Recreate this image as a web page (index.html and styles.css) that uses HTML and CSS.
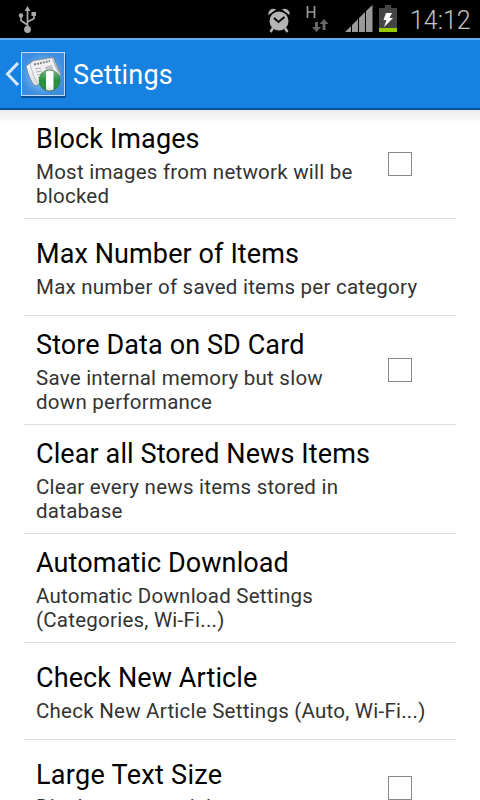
FILE: index.html
```html
<!DOCTYPE html>
<html lang="en">
<head>
<meta charset="utf-8">
<title>Settings</title>
<link rel="stylesheet" href="styles.css">
</head>
<body>
<div class="statusbar">
  <svg class="usb" width="20" height="28" viewBox="0 0 20 28" fill="none" stroke="#aaa" stroke-width="1.7">
    <path d="M9.5 4V23M9.5 19L3 14.5V10M9.5 16L16 12.5V9"/>
    <path d="M6.5 5L9.5 0L12.5 5ZM13.5 6H18V10H13.5Z" fill="#aaa" stroke="none"/>
    <circle cx="3" cy="9.5" r="2.2" fill="#aaa" stroke="none"/>
    <circle cx="9.5" cy="23.5" r="3.4" fill="#aaa" stroke="none"/>
  </svg>
  <svg class="alarm" width="22" height="25" viewBox="0 0 22 25">
    <path d="M5 20L2.5 24M17 20L19.500 24" stroke="#b4b4b4" stroke-width="2.500"/>
    <path d="M0.500 7A5 5 0 0 1 8 1.500ZM21.500 7A5 5 0 0 0 14 1.500Z" fill="#b4b4b4"/>
    <circle cx="11" cy="13" r="9.500" fill="#b4b4b4"/>
    <path d="M6 10L10.500 14L16.500 9" fill="none" stroke="#000" stroke-width="2"/>
  </svg>
  <svg class="data" width="24" height="27" viewBox="0 0 24 27">
    <path d="M1.500 0V12M8.500 0V12M1.500 6H8.500" stroke="#999" stroke-width="1.700" fill="none"/>
    <path d="M9 16V21H6L10.500 26L15 21H12V16ZM16.500 24V18H13.500L18 13L22.500 18H19.500V24Z" fill="#666"/>
  </svg>
  <svg class="signal" width="28" height="27" viewBox="0 0 28 27" fill="#999">
    <path d="M0 27L6 21V27ZM7 20L13 14V27H7ZM14 13L20 7V27H14ZM21 6L27.500 0V27H21Z"/>
  </svg>
  <svg class="battery" width="18" height="27" viewBox="0 0 18 27">
    <path d="M6 0H12V3H18V23H0V3H6Z" fill="#444"/>
    <path d="M0 23H18V27H0Z" fill="#99cc00"/>
    <path d="M7 8H13L10.500 13H14L5 22L7.500 15H4.500Z" fill="#fff"/>
  </svg>
  <span class="clock">14:12</span>
</div>
<header class="actionbar">
  <svg class="back" width="16" height="26" viewBox="0 0 16 26"><path d="M13 2L2.500 13L13 24" fill="none" stroke="#d8e9fa" stroke-width="3"/></svg>
  <svg class="logo" width="46" height="48" viewBox="0 0 46 48">
    <defs>
      <radialGradient id="tile"><stop offset="0" stop-color="#9bd0fa"/><stop offset="1" stop-color="#3c8ee0"/></radialGradient>
      <linearGradient id="paper" x2="1" y2="1"><stop offset="0" stop-color="#fff"/><stop offset="1" stop-color="#c4c6cc"/></linearGradient>
      <clipPath id="ball"><circle cx="28.500" cy="28.500" r="10.500"/></clipPath>
      <linearGradient id="shade" x2="0" y2="1"><stop offset="0" stop-color="#fff" stop-opacity=".45"/><stop offset=".5" stop-color="#fff" stop-opacity="0"/><stop offset="1" stop-color="#000" stop-opacity=".2"/></linearGradient>
    </defs>
    <rect x="0" y="2" width="45" height="44" rx="1" fill="#0a4f97"/>
    <rect x=".5" y=".5" width="43" height="43" fill="url(#tile)" stroke="#c0daf5"/>
    <path d="M5 14L12 9L32 5L40 22L35 27L14 34Q9 30 5 14Z" fill="url(#paper)" stroke="#6b7891" stroke-width=".8"/>
    <path d="M9 12Q12 25 17 32L31 27L38 22L31 6L12 9Z" fill="#f0f0f3" stroke="#999da8" stroke-width=".6"/>
    <path d="M13 12.500L29 9" stroke="#85878e" stroke-width="2" stroke-dasharray="2 1"/>
    <path d="M24 15L31 13L33 20L26 22Z" fill="#bfc1c7"/>
    <path d="M14 17L20 16M15 20L21 19M16 23L21 22M17 26L21 25M33 10L38 21" stroke="#b0b2b8" stroke-width="1.200"/>
    <g clip-path="url(#ball)"><rect x="17" y="17" width="24" height="24" fill="#219037"/><rect x="25" y="17" width="7.500" height="24" fill="#fff"/><rect x="17" y="17" width="24" height="24" fill="url(#shade)"/></g>
    <circle cx="28.500" cy="28.500" r="10.500" fill="none" stroke="#28723a" stroke-width=".7"/>
  </svg>
  <h1>Settings</h1>
</header>
<main class="list">
  <section class="row"><div class="text"><h2>Block Images</h2><p>Most images from network will be<br>blocked</p></div><span class="box"></span></section>
  <section class="row"><div class="text"><h2>Max Number of Items</h2><p>Max number of saved items per category</p></div></section>
  <section class="row"><div class="text"><h2>Store Data on SD Card</h2><p>Save internal memory but slow<br>down performance</p></div><span class="box"></span></section>
  <section class="row"><div class="text"><h2>Clear all Stored News Items</h2><p>Clear every news items stored in<br>database</p></div></section>
  <section class="row"><div class="text"><h2>Automatic Download</h2><p>Automatic Download Settings<br>(Categories, Wi-Fi...)</p></div></section>
  <section class="row"><div class="text"><h2>Check New Article</h2><p>Check New Article Settings (Auto, Wi-Fi...)</p></div></section>
  <section class="row last"><div class="text"><h2>Large Text Size</h2><p>Display news article</p></div><span class="box"></span></section>
</main>
</body>
</html>
```

FILE: styles.css
```css
* { box-sizing: border-box; }
body { margin: 0; width: 480px; height: 800px; overflow: hidden; background: #fff; font-family: Roboto, sans-serif; display: flex; flex-direction: column; }
h1, h2, p { margin: 0; font-weight: 400; white-space: nowrap; }
.statusbar { height: 38px; flex: none; background: #000; display: flex; align-items: flex-start; padding: 5px 9px 0 18px; }
.usb { margin-right: auto; margin-top: 1px; }
.alarm { margin: 3px 16px 0 0; }
.data { margin: 1px 15px 0 0; }
.signal { margin-right: 6px; }
.battery { margin-right: 13px; }
.clock { color: #c4c4c4; font-size: 25px; font-weight: 300; line-height: 31px; width: 61px; white-space: nowrap; }
.actionbar { height: 72px; flex: none; background: #1681e0; border-top: 2px solid #5eacf2; border-bottom: 2px solid #0b529a; display: flex; align-items: center; padding-left: 5px; }
.logo { margin-top: 4px; }
.actionbar h1 { color: #fff; font-size: 27px; line-height: 32px; letter-spacing: .15px; margin: 2px 0 0 6px; }
.list { flex: 1 0 auto; padding: 0 24px; background: linear-gradient(#ececec, #fff 14px); }
.row { min-height: 97px; padding: 12px 12px 10px; border-bottom: 1px solid #dedede; display: flex; align-items: center; }
.text { flex: 1; }
.row h2 { color: #000; font-size: 27px; line-height: 32px; letter-spacing: .1px; padding-top: 1px; }
.row p { color: #333; font-size: 20.5px; line-height: 24px; letter-spacing: .24px; padding-top: 5px; }
.last h2 { letter-spacing: .3px; }
.last p { padding-top: 4px; padding-bottom: 1px; }
.box { width: 24px; height: 24px; border: 1px solid #888; margin: 0 32px 2px 0; }
```
